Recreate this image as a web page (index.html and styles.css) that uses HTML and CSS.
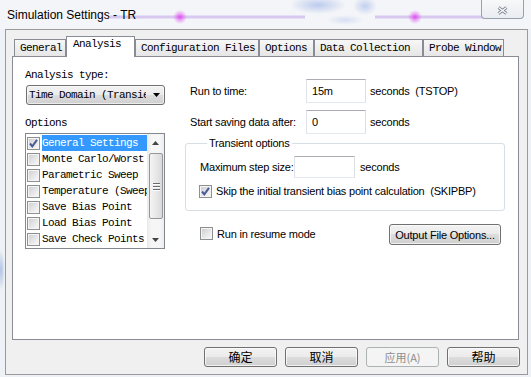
FILE: index.html
```html
<!DOCTYPE html>
<html lang="en">
<head>
  <meta charset="UTF-8" />
  <title>Simulation Settings - TR</title>
  <link rel="stylesheet" href="styles.css">
</head>
<body>

<div class="titlebar">
  <span class="title">Simulation Settings - TR</span>
  <span class="close">
    <svg width="11" height="9" viewBox="0 0 11 9">
      <path d="M1.5 1.5 L9.5 7.5 M9.5 1.5 L1.5 7.5" stroke="#7b8593" stroke-width="3" fill="none"/>
      <path d="M1.5 1.5 L9.5 7.5 M9.5 1.5 L1.5 7.5" stroke="#fff" stroke-width="1.2" fill="none"/>
    </svg>
  </span>
</div>

<div class="dialog">
  <div class="tabs">
    <span class="tab">General</span>
    <span class="tab active">Analysis</span>
    <span class="tab">Configuration Files</span>
    <span class="tab">Options</span>
    <span class="tab">Data Collection</span>
    <span class="tab">Probe Window</span>
  </div>

  <div class="panel">
    <div class="left">
      <div class="caption">Analysis type:</div>
      <div class="combo">
        <span class="combo-text">Time Domain (Transient)</span>
        <svg class="combo-arrow" width="7" height="4" viewBox="0 0 7 4"><polygon points="0,0 7,0 3.5,4" fill="#000"/></svg>
      </div>

      <div class="caption options">Options</div>
      <div class="list">
        <div class="items">
          <div class="item sel">
            <span class="chk"><svg width="11" height="11" viewBox="0 0 11 11"><path d="M2 5.5 L4.3 8.3 L9 1.8" stroke="#4a5a96" stroke-width="2" fill="none"/></svg></span>
            <span class="item-text">General Settings</span>
          </div>
          <div class="item"><span class="chk"></span><span class="item-text">Monte Carlo/Worst Case</span></div>
          <div class="item"><span class="chk"></span><span class="item-text">Parametric Sweep</span></div>
          <div class="item"><span class="chk"></span><span class="item-text">Temperature (Sweep)</span></div>
          <div class="item"><span class="chk"></span><span class="item-text">Save Bias Point</span></div>
          <div class="item"><span class="chk"></span><span class="item-text">Load Bias Point</span></div>
          <div class="item"><span class="chk"></span><span class="item-text">Save Check Points</span></div>
        </div>
        <div class="scroll">
          <div class="arrow"><svg width="7" height="4" viewBox="0 0 7 4"><polygon points="0,4 7,4 3.5,0" fill="#444"/></svg></div>
          <div class="thumb"><i></i><i></i><i></i></div>
          <div class="track"></div>
          <div class="arrow"><svg width="7" height="4" viewBox="0 0 7 4"><polygon points="0,0 7,0 3.5,4" fill="#444"/></svg></div>
        </div>
      </div>
    </div>

    <div class="right">
      <div class="row first">
        <span class="label">Run to time:</span>
        <input type="text" value="15m">
        <span class="unit">seconds&nbsp; (TSTOP)</span>
      </div>
      <div class="row">
        <span class="label">Start saving data after:</span>
        <input type="text" value="0">
        <span class="unit">seconds</span>
      </div>

      <fieldset class="group">
        <legend>Transient options</legend>
        <div class="row step">
          <span class="label">Maximum step size:</span>
          <input type="text" value="">
          <span class="unit">seconds</span>
        </div>
        <div class="check-row">
          <span class="chk"><svg width="11" height="11" viewBox="0 0 11 11"><path d="M2 5.5 L4.3 8.3 L9 1.8" stroke="#4a5a96" stroke-width="2" fill="none"/></svg></span>
          <span>Skip the initial transient bias point calculation&nbsp; (SKIPBP)</span>
        </div>
      </fieldset>

      <div class="resume">
        <div class="check-row">
          <span class="chk"></span>
          <span>Run in resume mode</span>
        </div>
        <button class="btn wide">Output File Options...</button>
      </div>
    </div>
  </div>

  <div class="actions">
    <button class="btn cjk">确定</button>
    <button class="btn cjk">取消</button>
    <button class="btn cjk disabled">应用(A)</button>
    <button class="btn cjk">帮助</button>
  </div>
</div>

</body>
</html>
```

FILE: styles.css
```css
* {
  box-sizing: border-box;
}
html, body {
  margin: 0;
}
body {
  width: 531px;
  height: 377px;
  overflow: hidden;
  background:
    radial-gradient(ellipse 4px 20px at 1px 270px, rgba(110,150,210,0.5), rgba(110,150,210,0)),
    #eef1f5;
  font-family: "Liberation Sans", Arial, sans-serif;
  font-size: 11px;
  letter-spacing: -0.2px;
  color: #000;
}

/* glass title bar */
.titlebar {
  display: flex;
  height: 29px;
  padding-left: 7px;
  background:
    radial-gradient(circle at 180px 17px, rgba(225,70,240,0.9), rgba(225,70,240,0.35) 4px, rgba(225,70,240,0) 7px),
    radial-gradient(circle at 415px 17px, rgba(225,70,240,0.9), rgba(225,70,240,0.35) 4px, rgba(225,70,240,0) 7px),
    radial-gradient(ellipse 28px 9px at 318px 5px, rgba(120,150,225,0.45), rgba(120,150,225,0)),
    radial-gradient(ellipse 12px 9px at 365px 6px, rgba(120,150,225,0.4), rgba(120,150,225,0)),
    radial-gradient(ellipse 18px 5px at 345px 20px, rgba(150,170,230,0.3), rgba(150,170,230,0)),
    linear-gradient(rgba(205,180,235,0) 15px, rgba(205,180,235,0.7) 16px, rgba(205,180,235,0.7) 18px, rgba(205,180,235,0) 19px) 110px 0 / 195px 29px no-repeat,
    linear-gradient(rgba(205,180,235,0) 15px, rgba(205,180,235,0.7) 16px, rgba(205,180,235,0.7) 18px, rgba(205,180,235,0) 19px) 375px 0 / 110px 29px no-repeat,
    #f3f5f8;
}
.title {
  margin-top: 8px;
  font-size: 12px;
  line-height: 14px;
  letter-spacing: 0;
}
.close {
  display: flex;
  align-items: center;
  justify-content: center;
  width: 43px;
  height: 19px;
  margin-left: auto;
  margin-right: 7px;
  padding-top: 2px;
  border: 1px solid #98a2ae;
  border-top: 0;
  border-radius: 0 0 4px 4px;
  background: linear-gradient(#f7f8fa, #e9ecf1);
}

/* dialog body */
.dialog {
  width: 523px;
  height: 346px;
  margin-left: 5px;
  padding: 6px 7px 0 6px;
  border: 1px solid #9a9a9a;
  background: #f0f0f0;
}
.tabs {
  display: flex;
  align-items: flex-end;
  height: 20px;
  padding-left: 2px;
}
.tab {
  height: 17px;
  padding-left: 5px;
  border: 1px solid #898c95;
  border-bottom: 0;
  background: linear-gradient(#f7f7f7, #e6e6e6);
  font-family: "Liberation Mono", monospace;
  font-size: 11px;
  letter-spacing: -0.6px;
  line-height: 16px;
  white-space: nowrap;
}
.tab:nth-child(1) { width: 52px; }
.tab:nth-child(2) { width: 69px; }
.tab:nth-child(3) { width: 124px; }
.tab:nth-child(4) { width: 55px; }
.tab:nth-child(5) { width: 109px; }
.tab:nth-child(6) { width: 81px; }
.tab.active {
  position: relative;
  z-index: 1;
  height: 21px;
  margin-bottom: -1px;
  padding-left: 6px;
  background: #fff;
  line-height: 15px;
}

.panel {
  display: flex;
  width: 507px;
  height: 284px;
  border: 1px solid #898c95;
  background: #fff;
}

/* left column */
.left {
  width: 152px;
  padding-left: 12px;
  font-family: "Liberation Mono", monospace;
  font-size: 11px;
  letter-spacing: -0.6px;
}
.caption {
  margin-top: 11px;
  line-height: 14px;
}
.combo {
  display: flex;
  align-items: center;
  width: 139px;
  height: 20px;
  margin: 3px 0 0 1px;
  padding-left: 2px;
  border: 1px solid #707070;
  border-radius: 3px;
  background: linear-gradient(#f2f2f2, #ebebeb 50%, #dddddd 50%, #cfcfcf);
  box-shadow: inset 0 0 0 1px rgba(255,255,255,0.6);
}
.combo-text {
  width: 117px;
  overflow: hidden;
  white-space: nowrap;
}
.combo-arrow {
  margin-left: 7px;
}
.list {
  display: flex;
  height: 116px;
  margin-top: 3px;
  border: 1px solid #828790;
}
.items {
  flex: 1;
  min-width: 0;
  padding-top: 1px;
}
.item {
  display: flex;
  align-items: center;
  height: 16px;
}
.item .chk {
  margin: 0 2px 0 1px;
}
.item-text {
  flex: 1;
  overflow: hidden;
  white-space: nowrap;
  line-height: 16px;
}
.item.sel .item-text {
  background: #3399ff;
  color: #fff;
}
.scroll {
  display: flex;
  flex-direction: column;
  width: 17px;
  background: linear-gradient(to right, #e9e9e9, #f6f6f6 25%, #f6f6f6 75%, #ececec);
}
.arrow {
  display: flex;
  align-items: center;
  justify-content: center;
  height: 17px;
}
.thumb {
  display: flex;
  flex-direction: column;
  align-items: center;
  justify-content: center;
  gap: 2px;
  height: 66px;
  margin: 2px 1px 0 2px;
  border: 1px solid #979797;
  border-radius: 2px;
  background: linear-gradient(to right, #f4f4f4, #e8e8e8 50%, #d9d9d9);
}
.thumb i {
  display: block;
  width: 7px;
  height: 1px;
  background: #6b6b6b;
  box-shadow: 0 1px 0 #fff;
}
.track {
  flex: 1;
}

/* checkboxes */
.chk {
  display: flex;
  align-items: center;
  justify-content: center;
  flex: none;
  width: 13px;
  height: 13px;
  border: 1px solid #8e8f8f;
  background: linear-gradient(135deg, #c9ccd1, #eeeeee 70%, #f8f8f8);
  box-shadow: inset 0 0 0 1px #f4f4f4;
}

/* right column */
.right {
  width: 320px;
  margin-left: 20px;
}
.row {
  display: flex;
  align-items: center;
  height: 24px;
  margin-top: 7px;
  padding-left: 5px;
}
.row.first {
  margin-top: 22px;
}
.label {
  width: 116px;
  flex: none;
}
input {
  width: 60px;
  height: 24px;
  margin: 0;
  padding: 0 0 0 5px;
  border: 1px solid;
  border-color: #abadb3 #dbdfe6 #e3e9ef #e2e3ea;
  font-family: "Liberation Sans", Arial, sans-serif;
  font-size: 11px;
  letter-spacing: -0.2px;
  color: #000;
  background: #fff;
}
.unit {
  margin-left: 4px;
  white-space: nowrap;
}
.group {
  margin: 2px 0 0;
  padding: 0 0 12px 14px;
  border: 1px solid #d5dfe5;
  border-radius: 3px;
}
.group legend {
  margin-left: 7px;
  padding: 0 2px;
  line-height: 14px;
}
.row.step {
  height: 22px;
  margin-top: 6px;
  padding-left: 0;
}
.row.step .label {
  width: 94px;
}
.row.step input {
  width: 61px;
  height: 22px;
}
.row.step .unit {
  margin-left: 5px;
}
.check-row {
  display: flex;
  align-items: center;
  gap: 4px;
  height: 14px;
  white-space: nowrap;
}
.group .check-row {
  margin: 6px 0 0 -1px;
}
.resume {
  display: flex;
  justify-content: space-between;
  align-items: flex-start;
  margin-top: 13px;
  padding: 0 4px 0 15px;
}
.resume .check-row {
  margin-top: 3px;
  height: 13px;
}

/* buttons */
.btn {
  height: 20px;
  margin: 0;
  padding: 0;
  border: 1px solid #707070;
  border-radius: 3px;
  background: linear-gradient(#f2f2f2, #ebebeb 50%, #dddddd 50%, #cfcfcf);
  box-shadow: inset 0 0 0 1px rgba(255,255,255,0.7);
  font-family: "Liberation Sans", Arial, sans-serif;
  font-size: 11px;
  letter-spacing: -0.2px;
  color: #000;
}
.btn.wide {
  width: 112px;
  height: 21px;
}
.actions {
  display: flex;
  justify-content: flex-end;
  gap: 8px;
  margin-top: 7px;
}
.btn.cjk {
  width: 73px;
  font-family: "Noto Sans CJK SC", sans-serif;
  font-size: 12px;
  letter-spacing: 0;
  line-height: 16px;
}
.btn.disabled {
  border-color: #adb2b5;
  background: #f4f4f4;
  box-shadow: none;
  color: #8d8d8d;
  font-size: 11px;
}
```
